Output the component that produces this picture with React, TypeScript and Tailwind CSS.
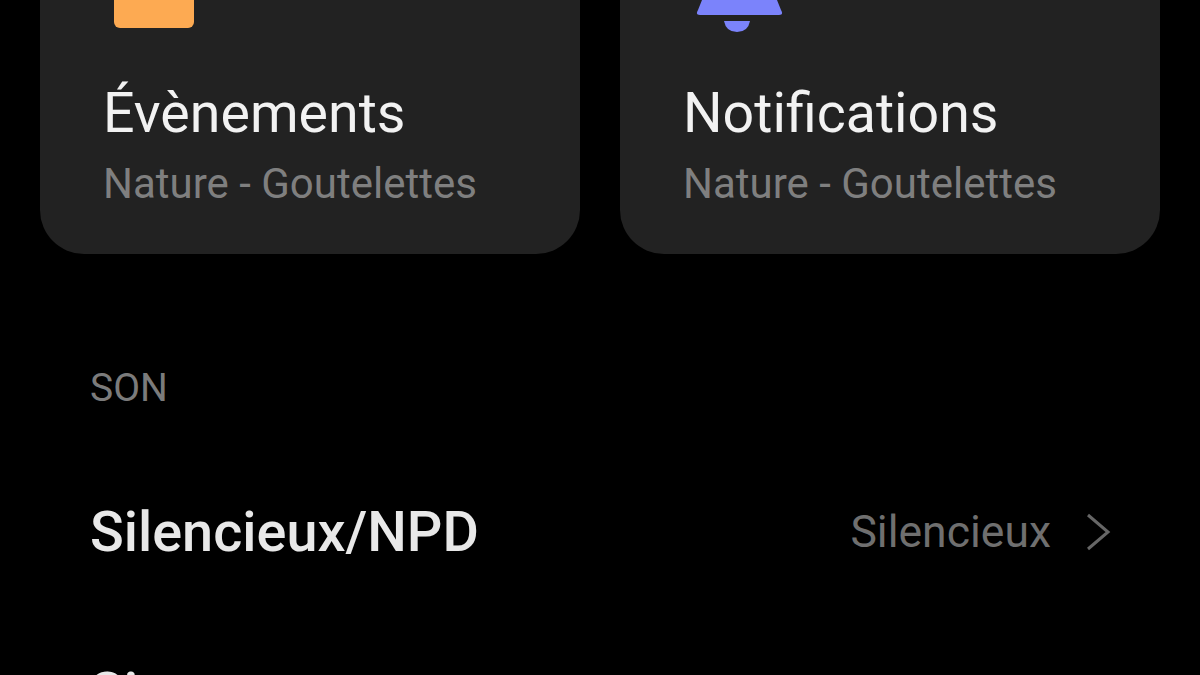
export default function App() {
  const cards = [
    {
      title: "Évènements",
      icon: (
        <div className="ml-[11px] w-[80px] h-[28px] rounded-b-[6px] bg-[#fdaa52]" />
      ),
    },
    {
      title: "Notifications",
      icon: (
        <svg width="92" height="33" viewBox="0 0 92 33" className="ml-[10px]">
          <path d="M9 0H84L88 10Q91 15 86 15H7Q2 15 5 10Z" fill="#7b83fb" />
          <path d="M31 21H57Q55 32 44 32Q33 32 31 21Z" fill="#7b83fb" />
        </svg>
      ),
    },
  ];
  return (
    <div className="w-[1200px] h-[675px] overflow-hidden bg-black font-['Roboto',sans-serif]">
      <div className="grid grid-cols-2 gap-10 px-10">
        {cards.map((c) => (
          <div key={c.title} className="h-[254px] rounded-b-[44px] bg-[#222222] pl-[63px] flex flex-col">
            <div className="h-[28px] flex items-start">{c.icon}</div>
            <div className="mt-[54px] text-[55.5px] leading-[64px] text-[#f2f2f2] whitespace-nowrap">{c.title}</div>
            <div className="mt-[15px] text-[42px] leading-[46px] text-[#7f7f7f] whitespace-nowrap">Nature - Goutelettes</div>
          </div>
        ))}
      </div>
      <div className="pl-[90px] pr-[89px]">
        <div className="mt-[112px] text-[39px] leading-[44px] text-[#7b7b7b]">SON</div>
        <div className="mt-[94px] flex items-center justify-between h-[56px]">
          <span className="text-[55.8px] font-medium leading-[56px] text-[#e8e8e8] whitespace-nowrap">Silencieux/NPD</span>
          <div className="flex items-center gap-[34px]">
            <span className="text-[44.5px] leading-[56px] text-[#6f6f6f]">Silencieux</span>
            <svg width="26" height="38" viewBox="0 0 26 38" fill="none" stroke="#666666" strokeWidth="3">
              <path d="M3 2L23 19L3 36" />
            </svg>
          </div>
        </div>
        <div className="mt-[105px] text-[55.8px] font-medium leading-[56px] text-[#e8e8e8]">Signaux</div>
      </div>
    </div>
  );
}
